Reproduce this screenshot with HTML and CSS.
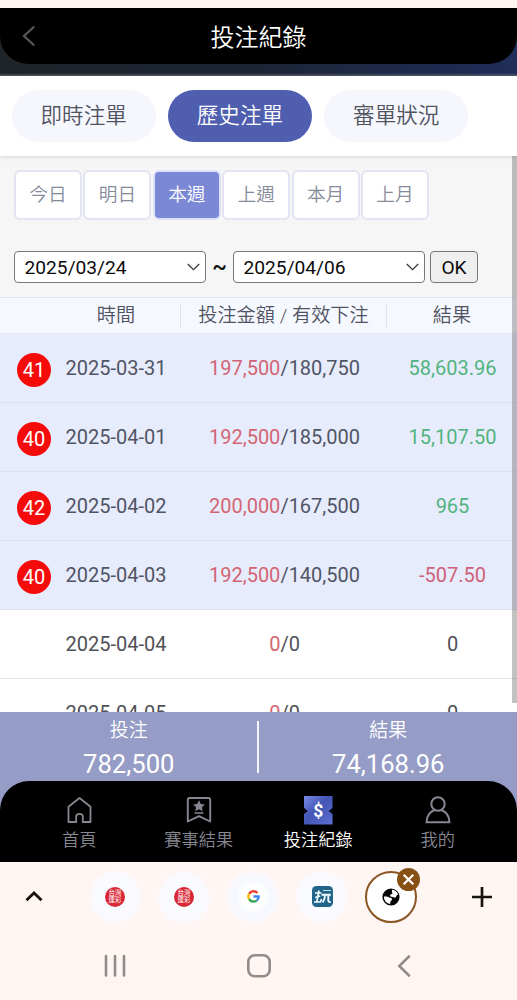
FILE: index.html
```html
<!DOCTYPE html>
<html lang="zh-Hant">
<head>
<meta charset="utf-8">
<title>投注紀錄</title>
<link rel="stylesheet" href="styles.css">
</head>
<body>
<div class="hero">
  <header class="topbar">
    <svg class="back" width="14" height="22" viewBox="0 0 14 22"><path d="M12.3 1.5 2 11l10.300 9.500" fill="none" stroke="#55555a" stroke-width="2.300"/></svg>
    <h1>投注紀錄</h1>
  </header>
</div>
<nav class="tabs">
  <div class="tab">即時注單</div>
  <div class="tab active">歷史注單</div>
  <div class="tab">審單狀況</div>
</nav>
<main class="content">
  <div class="periods">
    <div class="period">今日</div><div class="period">明日</div><div class="period active">本週</div><div class="period">上週</div><div class="period">本月</div><div class="period">上月</div>
  </div>
  <div class="range">
    <div class="select">2025/03/24<svg width="13" height="8" viewBox="0 0 13 8"><path d="m.8 1 5.700 5.700L12.200 1" fill="none" stroke="#333" stroke-width="1.200"/></svg></div>
    <span class="tilde">~</span>
    <div class="select">2025/04/06<svg width="13" height="8" viewBox="0 0 13 8"><path d="m.8 1 5.700 5.700L12.200 1" fill="none" stroke="#333" stroke-width="1.200"/></svg></div>
    <div class="ok">OK</div>
  </div>
  <div class="head"><span class="when">時間</span><span class="bet">投注金額 / 有效下注</span><span class="res">結果</span></div>
  <div class="row hit"><span class="count">41</span><span class="date">2025-03-31</span><span class="amount"><i>197,500</i>/180,750</span><span class="result win">58,603.96</span></div>
  <div class="row hit"><span class="count">40</span><span class="date">2025-04-01</span><span class="amount"><i>192,500</i>/185,000</span><span class="result win">15,107.50</span></div>
  <div class="row hit"><span class="count">42</span><span class="date">2025-04-02</span><span class="amount"><i>200,000</i>/167,500</span><span class="result win">965</span></div>
  <div class="row hit"><span class="count">40</span><span class="date">2025-04-03</span><span class="amount"><i>192,500</i>/140,500</span><span class="result loss">-507.50</span></div>
  <div class="row"><span class="date">2025-04-04</span><span class="amount"><i>0</i>/0</span><span class="result">0</span></div>
  <div class="row"><span class="date">2025-04-05</span><span class="amount"><i>0</i>/0</span><span class="result">0</span></div>
  <div class="scrollbar"></div>
</main>
<footer class="footer">
  <div class="summary">
    <div class="total"><span>投注</span><b>782,500</b></div>
    <div class="divider"></div>
    <div class="total"><span>結果</span><b>74,168.96</b></div>
  </div>
  <nav class="nav">
    <div class="item">
      <svg width="30" height="30" viewBox="0 0 30 30"><path d="M4.500 11.800 15.500 3l11 8.800V27h-7.700v-5.500q0-2.700-3.300-2.700t-3.300 2.700V27H4.500z" fill="none" stroke="#878792" stroke-width="1.800" stroke-linejoin="round"/></svg>
      <span>首頁</span>
    </div>
    <div class="item">
      <svg width="30" height="30" viewBox="0 0 30 30"><path d="M5.500 3h19q1.700 0 1.700 1.700V26.500L15 21.200 3.800 26.500V4.700Q3.800 3 5.500 3z" fill="none" stroke="#878792" stroke-width="1.900" stroke-linejoin="round"/><path d="m15 5.200 1.800 3.700 4.100.5-3 2.800.8 4-3.700-2-3.700 2 .8-4-3-2.800 4.100-.5zM10.500 17.200h9v1.600h-9z" fill="#878792"/></svg>
      <span>賽事結果</span>
    </div>
    <div class="item active">
      <svg width="30" height="30" viewBox="0 0 30 30"><defs><linearGradient id="ticket" x1="0" y1="0" x2="1" y2="1"><stop offset="0" stop-color="#7a8ae6"/><stop offset=".45" stop-color="#4355b5"/><stop offset="1" stop-color="#5c70d2"/></linearGradient></defs><path d="M1 1h28.500v12a3.200 3.200 0 0 0 0 6v10.500H1V19a3.200 3.200 0 0 0 0-6z" fill="url(#ticket)"/><path d="M1 13.200 5 16l-4 2.800zM29.500 13.200l-4 2.800 4 2.800z" fill="#080a1a"/><text x="15.300" y="21.500" text-anchor="middle" font-family="Roboto, sans-serif" font-size="17.500" font-weight="700" fill="#fff">$</text></svg>
      <span>投注紀錄</span>
    </div>
    <div class="item">
      <svg width="30" height="30" viewBox="0 0 30 30"><g fill="none" stroke="#878792" stroke-width="2"><circle cx="15" cy="9" r="6.700"/><path d="M3.500 27.200c0-6.500 4-10.800 8.200-12.200M18.300 15c4.200 1.400 8.200 5.700 8.200 12.200M2.600 27.200h24.800"/></g></svg>
      <span>我的</span>
    </div>
  </nav>
</footer>
<div class="browser">
  <svg class="edge" width="18" height="12" viewBox="0 0 18 12"><path d="m1.500 10.300 7.500-7.300 7.500 7.300" fill="none" stroke="#17130f" stroke-width="2.800"/></svg>
  <div class="sites">
    <div class="site"><span class="lotto"><span>台灣<br>運彩</span></span></div>
    <div class="site"><span class="lotto"><span>台灣<br>運彩</span></span></div>
    <div class="site google"><svg width="13" height="13" viewBox="0 0 48 48"><g fill="none" stroke-width="9"><path d="M38.600 11A19 19 0 0 0 7.800 14.500" stroke="#ea4335"/><path d="M7.800 14.500a19 19 0 0 0 0 19" stroke="#fbbc05"/><path d="M7.800 33.500A19 19 0 0 0 36.500 38.300" stroke="#34a853"/><path d="M36.500 38.300A18 18 0 0 0 43 24H24" stroke="#4285f4"/></g></svg></div>
    <div class="site"><svg width="21" height="21" viewBox="0 0 21 21"><rect width="21" height="21" rx="4.500" fill="#236489"/><g fill="none" stroke="#eefcff"><path d="M3 7h6.500M7 4.500 4.800 15.800M2 16h6.500l1-3M3.200 11.500l5-1.500" stroke-width="1.700"/><path d="M9.500 8.800h9.300M13 9q0 4.500-2.300 7.300M16.300 9v5.500q0 1.800 2.400 1.500" stroke-width="1.900"/><path d="M11 4.500h8" stroke-width=".8"/></g></svg></div>
    <div class="site current"><svg width="18" height="18" viewBox="0 0 18 18"><circle cx="9" cy="9" r="8.600" fill="#050505"/><path d="M10.300 1.800c2.700.4 5 2.200 5.900 4.800-1.200.2-1.800.9-2 2-.2 1.300-1.700 1.200-2.700.6-1-.7-2.800 0-3.300-1.300-.5-1.200.8-1.900 1.800-2 .9-.1-.7-3.300.3-4.100zM1.900 8.200c1.600.2 3.600.3 5 1 1.500.8 3.300.5 3.200 2-.1 1.300-1.600 1.400-1.700 2.700l-.2 2.200A7.300 7.300 0 0 1 1.900 8.200z" fill="#fff"/></svg><span class="close"><svg width="13" height="13" viewBox="0 0 13 13"><path d="m1.700 1.700 9.600 9.600m0-9.600-9.600 9.600" stroke="#fff" stroke-width="2.200"/></svg></span></div>
  </div>
  <svg class="plus" width="22" height="22" viewBox="0 0 22 22"><path d="M11 1v20M1 11h20" stroke="#17130f" stroke-width="2.700"/></svg>
</div>
<div class="system">
  <svg width="22" height="24" viewBox="0 0 22 24"><path d="M2 2v19.500M11 2v19.500M20 2v19.500" stroke="#918c8a" stroke-width="2.600" stroke-linecap="round"/></svg>
  <svg class="home" width="26" height="26" viewBox="0 0 26 26"><rect x="2.300" y="2.300" width="21.400" height="20.900" rx="6.500" fill="none" stroke="#918c8a" stroke-width="2.600"/></svg>
  <svg width="16" height="24" viewBox="0 0 16 24"><path d="M13.700 1.800 3.300 12l10.400 10.200" fill="none" stroke="#918c8a" stroke-width="2.600"/></svg>
</div>
</body>
</html>
```
FILE: styles.css
```css
* { box-sizing: border-box; }
body {
  margin: 0;
  padding-top: 8px;
  width: 517px;
  height: 1000px;
  overflow: hidden;
  display: flex;
  flex-direction: column;
  background: #fff6f3;
  font-family: Roboto, "Noto Sans CJK TC", sans-serif;
  font-weight: 400;
  color: #505362;
}
svg { display: block; flex: none; }
.hero {
  height: 68px;
  flex: none;
  background: linear-gradient(transparent 65px, #777880aa 68px), linear-gradient(90deg, #1e2428, #1c2536 50%, #1f2d58);
}
.topbar {
  height: 56px;
  display: grid;
  grid-template-columns: 1fr auto 1fr;
  align-items: center;
  padding: 0 0 0 22px;
  background: #000;
  border-radius: 0 0 28px 28px;
}
.topbar h1 {
  margin: 3px 22px 0 0;
  font-size: 24px;
  line-height: 34px;
  font-weight: 350;
  color: #fff;
}
.tabs {
  height: 80px;
  flex: none;
  display: flex;
  gap: 12px;
  padding: 14px 11.500px 0;
  background: #fff;
  box-shadow: 0 1px 4px #0002;
  z-index: 1;
}
.tab {
  width: 144.300px;
  height: 52px;
  border-radius: 26px;
  background: #f6f7fd;
  font-size: 21.600px;
  font-weight: 350;
  line-height: 52px;
  text-align: center;
}
.tab.active { background: #505eb0; color: #fff; }
.content {
  height: 556px;
  flex: none;
  position: relative;
  overflow: hidden;
  background: #f6f6f6;
}
.periods { display: flex; gap: 1.300px; padding: 14px 0 0 14px; }
.period {
  width: 68.100px;
  height: 50px;
  border: 2px solid #e3e4f3;
  border-radius: 6px;
  background: #fff;
  color: #858b9b;
  font-size: 18.700px;
  font-weight: 350;
  line-height: 46px;
  text-align: center;
}
.period.active { background: #7a88d6; border-color: #dde1fa; color: #fff; }
.range {
  display: flex;
  align-items: center;
  margin-top: 31px;
  padding-left: 14px;
  color: #0b0b0b;
  font-size: 19.200px;
}
.select {
  width: 192px;
  height: 32px;
  display: flex;
  align-items: center;
  justify-content: space-between;
  padding: 0 5px 0 9.500px;
  border: 1.500px solid #777;
  border-radius: 4px;
  background: #fff;
}
.tilde { width: 27px; text-align: center; font-size: 22px; font-weight: 500; line-height: 30px; }
.ok {
  width: 48px;
  height: 32px;
  margin-left: 5px;
  border: 1.500px solid #777;
  border-radius: 4px;
  background: #efefef;
  line-height: 31px;
  text-align: center;
}
.head {
  display: grid;
  grid-template-columns: 180px 207px 130px;
  align-items: center;
  height: 37px;
  margin-top: 14px;
  border-top: 1px solid #e2e6f3;
  border-bottom: 1px solid #e2e6f3;
  background: #f5f8ff;
  font-size: 19.200px;
  font-weight: 350;
  text-align: center;
}
.head span { height: 25px; line-height: 26px; }
.head .when { padding-left: 52px; }
.head .bet { border-left: 1px solid #dee3f1; border-right: 1px solid #dee3f1; }
.row {
  display: grid;
  grid-template-columns: 51px 130px 207px 129px;
  align-items: center;
  height: 69px;
  border-bottom: 1px solid #e2e2e4;
  background: #fff;
  color: #505156;
  font-size: 20px;
  text-align: center;
}
.row.hit { background: #e7ecfd; border-color: #dce0ef; color: #505464; }
.count {
  grid-column: 1;
  justify-self: end;
  width: 34px;
  height: 34px;
  margin-top: 3px;
  border-radius: 50%;
  background: #f60b0b;
  color: #fff;
  line-height: 34px;
}
.date { grid-column: 2; }
.amount { grid-column: 3; }
.result { grid-column: 4; }
.amount i { font-style: normal; color: #d36573; }
.result.win { color: #51b47e; }
.result.loss { color: #cf6078; }
.scrollbar {
  position: absolute;
  top: 0;
  right: 0;
  width: 5px;
  height: 547px;
  background: #6668;
  opacity: .75;
}
.footer { flex: none; height: 150px; background: #959cc5; }
.summary { height: 69px; display: flex; color: #fff; }
.total {
  flex: 1;
  display: flex;
  flex-direction: column;
  align-items: center;
  padding-top: 5px;
}
.total span { font-size: 19px; line-height: 27px; font-weight: 350; }
.total b { margin-top: 5px; font-size: 25.600px; line-height: 30px; font-weight: 400; }
.divider { width: 2px; height: 52px; margin: 9px 1px 0 -1px; background: #f5f6ff; }
.nav {
  height: 81px;
  display: grid;
  grid-template-columns: repeat(4, 1fr);
  padding: 14px 19.500px 0;
  background: #000;
  border-radius: 29px 29px 0 0;
}
.item {
  display: flex;
  flex-direction: column;
  align-items: center;
  color: #878792;
  font-size: 17.200px;
  font-weight: 350;
  line-height: 26px;
}
.item span { margin-top: 2px; }
.item.active { color: #fff; }
.browser {
  height: 69px;
  flex: none;
  display: flex;
  align-items: center;
  padding-left: 25px;
}
.edge { margin-top: -2px; }
.sites { display: flex; gap: 17px; margin-left: 46px; }
.site {
  width: 52px;
  height: 52px;
  display: flex;
  align-items: center;
  justify-content: center;
  border-radius: 50%;
  background: radial-gradient(#f9fbff 48%, #fbf8fb 70%);
}
.google { background: radial-gradient(#fff 32%, #f5f8ff 48%, #fbf8fb 70%); }
.lotto {
  width: 20px;
  height: 20px;
  display: flex;
  align-items: center;
  justify-content: center;
  border-radius: 50%;
  background: #d92735;
  color: #fff;
}
.lotto span {
  flex: none;
  font-size: 6.500px;
  line-height: 6.500px;
  font-weight: 400;
}
.current { position: relative; border: 2.500px solid #8b5523; background: #fff; }
.close {
  position: absolute;
  right: -5px;
  top: -5px;
  width: 23px;
  height: 23px;
  display: flex;
  align-items: center;
  justify-content: center;
  border-radius: 50%;
  background: #875116;
}
.plus { margin-left: 54px; }
.system {
  flex: 1;
  display: flex;
  align-items: center;
  justify-content: space-between;
  padding: 1px 105px 0 104px;
}
.home { margin: 0 2px 0 -2px; }
```
